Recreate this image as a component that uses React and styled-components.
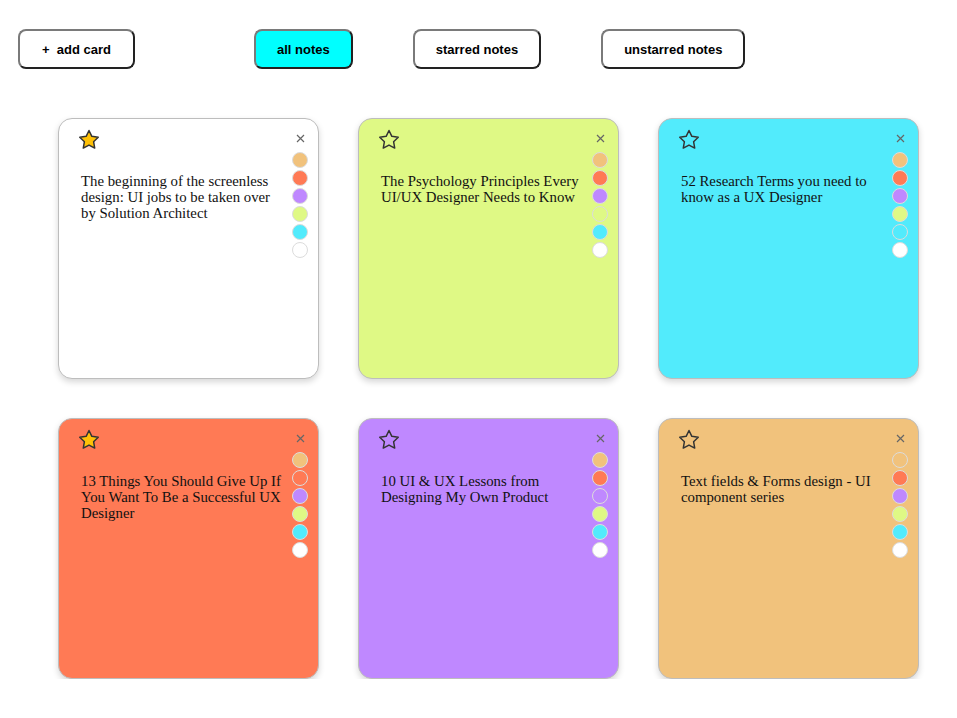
import React from "react";
import styled, { createGlobalStyle } from "styled-components";

const Global = createGlobalStyle`
  html, body { margin: 0; padding: 0; background: #fff; }
  body { font-family: "Liberation Serif", "Times New Roman", serif; }
`;

const COLORS = {
  orange: "#f1c27c",
  red: "#ff7a55",
  purple: "#bf88ff",
  lime: "#dff985",
  cyan: "#52ebfc",
  white: "#ffffff",
};
const ORDER = ["orange", "red", "purple", "lime", "cyan", "white"];

const NOTES = [
  { text: "The beginning of the screenless design: UI jobs to be taken over by Solution Architect", color: "white", starred: true },
  { text: "The Psychology Principles Every UI/UX Designer Needs to Know", color: "lime", starred: false },
  { text: "52 Research Terms you need to know as a UX Designer", color: "cyan", starred: false },
  { text: "13 Things You Should Give Up If You Want To Be a Successful UX Designer", color: "red", starred: true },
  { text: "10 UI & UX Lessons from Designing My Own Product", color: "purple", starred: false },
  { text: "Text fields & Forms design - UI component series", color: "orange", starred: false },
];

const Page = styled.div`
  padding: 29px 0 0 18px;
`;

const Toolbar = styled.div`
  display: flex;
  align-items: center;
  gap: 60px;
`;

const Button = styled.button`
  height: 40px;
  padding: 0 ${(p) => (p.$spaced ? "22px" : "21px")};
  border: 2px solid;
  border-color: #7a7a7a #222 #222 #7a7a7a;
  border-radius: 8px;
  background: ${(p) => (p.$active ? "#00ffff" : "#fff")};
  font-family: "Liberation Sans", Arial, sans-serif;
  font-weight: bold;
  font-size: 13px;
  color: #000;
  cursor: pointer;
  margin-right: ${(p) => (p.$spaced ? "59px" : "0")};
  white-space: pre;
`;

const Grid = styled.div`
  display: grid;
  grid-template-columns: repeat(3, 261px);
  gap: 39px;
  margin: 49px 0 0 40px;
`;

const Card = styled.div`
  box-sizing: border-box;
  width: 261px;
  height: 261px;
  border: 1px solid #bdbdbd;
  border-radius: 14px;
  background: ${(p) => p.$bg};
  box-shadow: 0 3px 6px rgba(0, 0, 0, 0.16);
  display: flex;
  padding: 10px 10px 0 19px;
`;

const Main = styled.div`
  flex: 1;
  display: flex;
  flex-direction: column;
`;

const StarBtn = styled.div`
  width: 22px;
  height: 22px;
  display: flex;
`;

const Text = styled.p`
  margin: 22px 0 0 3px;
  width: 203px;
  font-size: 14.8px;
  line-height: 16px;
  color: #111;
`;

const Side = styled.div`
  width: 16px;
  display: flex;
  flex-direction: column;
  align-items: center;
  gap: 2px;
  padding-top: 1px;
`;

const Close = styled.div`
  width: 16px;
  height: 16px;
  margin-bottom: 4px;
  display: flex;
  align-items: center;
  justify-content: center;
`;

const Swatch = styled.div`
  box-sizing: border-box;
  width: 16px;
  height: 16px;
  border-radius: 50%;
  border: 1px solid #dcdcdc;
  background: ${(p) => p.$c};
`;

function Star({ filled }) {
  return (
    <svg width="22" height="22" viewBox="0 0 24 24">
      <path
        d="M12 1.6l3.1 6.4 7 .98-5.1 4.9 1.25 6.95L12 17.5l-6.25 3.33L7 13.880 1.9 8.98l7-.98z"
        fill={filled ? "#ffc107" : "none"}
        stroke="#333"
        strokeWidth="1.6"
        strokeLinejoin="round"
      />
    </svg>
  );
}

function CloseIcon() {
  return (
    <svg width="9" height="9" viewBox="0 0 9 9">
      <path d="M1 1L8 8M8 1L1 8" stroke="#666" strokeWidth="1.2" />
    </svg>
  );
}

function Note({ note }) {
  return (
    <Card $bg={COLORS[note.color]}>
      <Main>
        <StarBtn>
          <Star filled={note.starred} />
        </StarBtn>
        <Text>{note.text}</Text>
      </Main>
      <Side>
        <Close>
          <CloseIcon />
        </Close>
        {ORDER.map((c) => (
          <Swatch key={c} $c={COLORS[c]} />
        ))}
      </Side>
    </Card>
  );
}

export default function App() {
  return (
    <Page>
      <Global />
      <Toolbar>
        <Button $spaced>{"+  add card"}</Button>
        <Button $active>all notes</Button>
        <Button>starred notes</Button>
        <Button>unstarred notes</Button>
      </Toolbar>
      <Grid>
        {NOTES.map((n, i) => (
          <Note key={i} note={n} />
        ))}
      </Grid>
    </Page>
  );
}
